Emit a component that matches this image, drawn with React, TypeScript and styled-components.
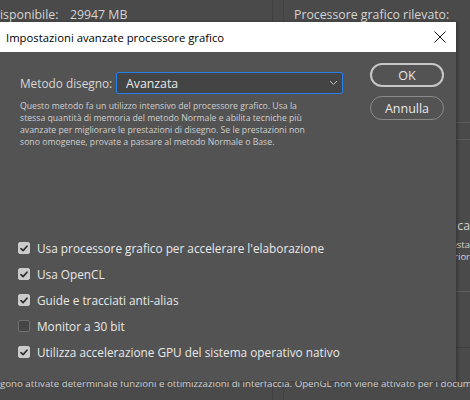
import React from "react";
import styled, { createGlobalStyle } from "styled-components";

const Global = createGlobalStyle`
  html, body { margin: 0; padding: 0; background: #4a4a4a; }
  body { width: 470px; height: 400px; overflow: hidden; font-family: "Open Sans", "Noto Sans", sans-serif; }
`;

const Stage = styled.div`
  position: relative;
  width: 470px;
  height: 400px;
  overflow: hidden;
  background: #4a4a4a;
`;

/* ---------- background preferences page ---------- */
const BackPage = styled.div`
  display: grid;
  grid-template-columns: 273px 11px 186px;
  height: 100%;
  color: #d4d4d4;
  font-size: 12.3px;
`;

const BackCol = styled.div<{ $divider?: boolean }>`
  border-right: ${(p) => (p.$divider ? "1px solid #404040" : "none")};
  display: flex;
  flex-direction: column;
  overflow: hidden;
`;

const BackHeader = styled.div`
  padding-top: 6px;
  height: 22px;
  box-sizing: border-box;
  white-space: nowrap;
  display: flex;
`;

const Field = styled.span<{ $w?: number }>`
  display: inline-block;
  width: ${(p) => (p.$w ? `${p.$w}px` : "auto")};
`;

const BackRight = styled.div`
  display: flex;
  flex-direction: column;
  padding-left: 10px;
  white-space: nowrap;
`;

const HLine = styled.div<{ $top: number; $tone: string }>`
  margin-top: ${(p) => p.$top}px;
  height: 1px;
  margin-left: -10px;
  background: ${(p) => p.$tone};
`;

const BackText = styled.div<{ $top: number; $size: number }>`
  margin-top: ${(p) => p.$top}px;
  font-size: ${(p) => p.$size}px;
  line-height: ${(p) => Math.round(p.$size * 1.3)}px;
  text-align: right;
  padding-right: 0;
`;

const BottomText = styled.div`
  position: absolute;
  left: 0;
  right: 0;
  top: 377px;
  font-size: 9.7px;
  color: #d0d0d0;
  white-space: nowrap;
  overflow: hidden;
`;

/* ---------- dialog ---------- */
const Dialog = styled.div`
  position: absolute;
  left: 0;
  top: 22px;
  width: 456px;
  height: 359px;
  display: flex;
  flex-direction: column;
  background: #535353;
  box-shadow: 2px 0 3px rgba(0, 0, 0, 0.25);
`;

const TitleBar = styled.div`
  height: 30px;
  background: #ffffff;
  display: flex;
  align-items: center;
  justify-content: space-between;
  padding: 0 9px 0 6px;
  font-size: 11.3px;
  color: #000;
`;

const CloseBtn = styled.div`
  width: 14px;
  height: 14px;
  display: flex;
  align-items: center;
  justify-content: center;
`;

const Body = styled.div`
  flex: 1;
  display: flex;
  flex-direction: column;
  padding: 11px 12px 0 20px;
`;

const Top = styled.div`
  display: grid;
  grid-template-columns: 323px 74px;
  column-gap: 27px;
`;

const LeftCol = styled.div`
  padding-top: 9px;
  display: flex;
  flex-direction: column;
`;

const MethodRow = styled.div`
  display: flex;
  align-items: center;
  gap: 5px;
`;

const Label = styled.span`
  width: 91px;
  font-size: 11.8px;
  color: #d6d6d6;
  white-space: nowrap;
`;

const Select = styled.div`
  width: 227px;
  height: 22px;
  box-sizing: border-box;
  border: 1px solid #2680eb;
  border-radius: 2px;
  background: #444444;
  display: flex;
  align-items: center;
  justify-content: space-between;
  padding: 0 4px 0 9px;
  color: #e8e8e8;
  font-size: 12.3px;
`;

const Description = styled.div`
  margin-top: 6px;
  font-size: 8.7px;
  line-height: 12px;
  color: #cfcfcf;
`;

const DescLine = styled.div`
  white-space: nowrap;
`;

const Buttons = styled.div`
  display: flex;
  flex-direction: column;
  gap: 9px;
`;

const Button = styled.div<{ $primary?: boolean }>`
  height: 24px;
  box-sizing: border-box;
  border-radius: 12px;
  border: ${(p) => (p.$primary ? "2px solid #c6c6c6" : "1px solid #8a8a8a")};
  display: flex;
  align-items: center;
  justify-content: center;
  color: #e6e6e6;
  font-size: 12.5px;
`;

const CheckList = styled.div`
  margin-top: 87px;
  margin-left: -2px;
  display: flex;
  flex-direction: column;
`;

const CheckRow = styled.div`
  height: 26px;
  display: flex;
  align-items: center;
  gap: 7px;
  color: #e8e8e8;
  font-size: 11.8px;
  white-space: nowrap;
`;

const Box = styled.div<{ $checked: boolean }>`
  width: 12px;
  height: 12px;
  box-sizing: border-box;
  border-radius: 2px;
  background: ${(p) => (p.$checked ? "#cbcbcb" : "#464646")};
  border: 1px solid ${(p) => (p.$checked ? "#cbcbcb" : "#707070")};
  display: flex;
  align-items: center;
  justify-content: center;
`;

const Check = () => (
  <svg width="8" height="7" viewBox="0 0 8 7">
    <path d="M1 3.6 L3.1 5.6 L7 1.2" fill="none" stroke="#2e2e2e" strokeWidth="1.7" strokeLinecap="round" strokeLinejoin="round" />
  </svg>
);

const checks: { label: string; checked: boolean }[] = [
  { label: "Usa processore grafico per accelerare l'elaborazione", checked: true },
  { label: "Usa OpenCL", checked: true },
  { label: "Guide e tracciati anti-alias", checked: true },
  { label: "Monitor a 30 bit", checked: false },
  { label: "Utilizza accelerazione GPU del sistema operativo nativo", checked: true },
];

export default function App() {
  return (
    <>
      <Global />
      <Stage>
        <BackPage>
          <BackCol $divider>
            <BackHeader>
              <Field $w={70}>isponibile:</Field>
              <Field>29947 MB</Field>
            </BackHeader>
          </BackCol>
          <BackCol $divider />
          <BackCol>
            <BackRight>
              <BackHeader>Processore grafico rilevato:</BackHeader>
              <HLine $top={100} $tone="#5c5c5c" />
              <HLine $top={16} $tone="#5c5c5c" />
              <BackText $top={78} $size={12.3}>Impostazioni e ca</BackText>
              <BackText $top={5} $size={9.5}>Questa</BackText>
              <BackText $top={0} $size={9.5}>superior</BackText>
              <HLine $top={28} $tone="#626262" />
              <HLine $top={55} $tone="#404040" />
            </BackRight>
          </BackCol>
        </BackPage>
        <BottomText>
          gono attivate determinate funzioni e ottimizzazioni di interfaccia. OpenGL non viene attivato per i documenti
        </BottomText>

        <Dialog>
          <TitleBar>
            <span>Impostazioni avanzate processore grafico</span>
            <CloseBtn>
              <svg width="12" height="12" viewBox="0 0 12 12">
                <path d="M0.5 0.5 L11.5 11.5 M11.5 0.5 L0.5 11.5" stroke="#111" strokeWidth="1" />
              </svg>
            </CloseBtn>
          </TitleBar>
          <Body>
            <Top>
              <LeftCol>
                <MethodRow>
                  <Label>Metodo disegno:</Label>
                  <Select>
                    <span>Avanzata</span>
                    <svg width="9" height="6" viewBox="0 0 9 6">
                      <path d="M1 1 L4.5 4.5 L8 1" fill="none" stroke="#bdbdbd" strokeWidth="1" />
                    </svg>
                  </Select>
                </MethodRow>
                <Description>
                  <DescLine>Questo metodo fa un utilizzo intensivo del processore grafico. Usa la</DescLine>
                  <DescLine>stessa quantità di memoria del metodo Normale e abilita tecniche più</DescLine>
                  <DescLine>avanzate per migliorare le prestazioni di disegno. Se le prestazioni non</DescLine>
                  <DescLine>sono omogenee, provate a passare al metodo Normale o Base.</DescLine>
                </Description>
              </LeftCol>
              <Buttons>
                <Button $primary>OK</Button>
                <Button>Annulla</Button>
              </Buttons>
            </Top>
            <CheckList>
              {checks.map((c) => (
                <CheckRow key={c.label}>
                  <Box $checked={c.checked}>{c.checked && <Check />}</Box>
                  <span>{c.label}</span>
                </CheckRow>
              ))}
            </CheckList>
          </Body>
        </Dialog>
      </Stage>
    </>
  );
}
